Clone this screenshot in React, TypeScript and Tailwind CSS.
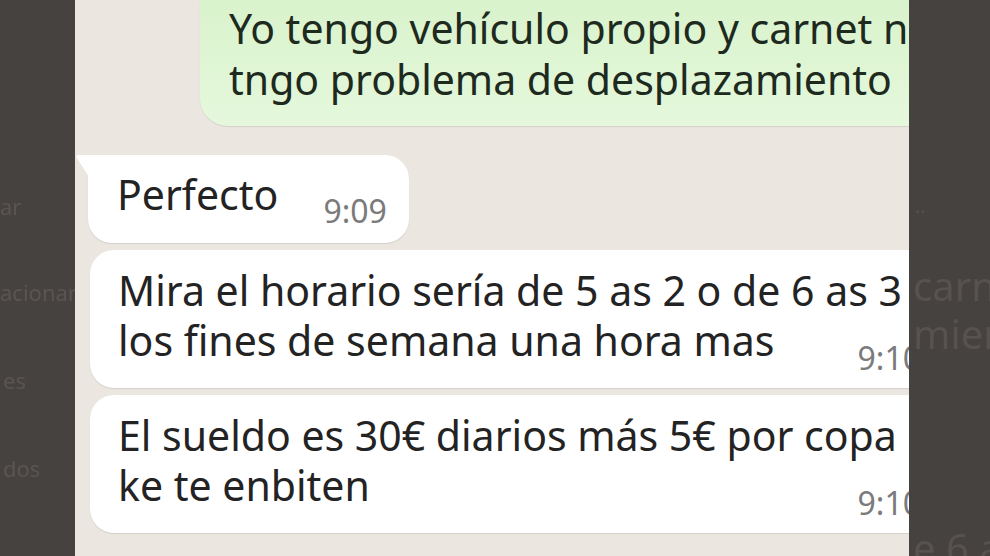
import React from 'react';

const chatFont = { fontFamily: '"Noto Sans", "Open Sans", sans-serif' };

const Time: React.FC<{ value: string; className?: string }> = ({ value, className = '' }) => (
  <div className={`text-[32px] leading-[30px] text-[#7b7b7b] whitespace-nowrap ${className}`}>{value}</div>
);

export default function App() {
  return (
    <div
      className="w-[990px] h-[556px] flex overflow-hidden bg-[#46423f]"
      style={chatFont}
    >
      {/* left blurred side */}
      <div className="w-[75px] shrink-0 overflow-hidden text-[22px] text-[#5a5552] whitespace-nowrap blur-[0.6px]">
        <div className="mt-[194px] leading-[24px]">ar</div>
        <div className="mt-[62px] leading-[24px]">acionar</div>
        <div className="mt-[64px] ml-[3px] leading-[24px]">es</div>
        <div className="mt-[64px] ml-[3px] leading-[24px]">dos</div>
      </div>

      {/* chat */}
      <div className="w-[834px] shrink-0 overflow-hidden bg-[#ece6e1] flex flex-col text-[41px] text-[#232323]">
        {/* outgoing */}
        <div className="ml-[125px] w-[760px] h-[126px] shrink-0 rounded-bl-[28px] bg-gradient-to-b from-[#d9f3cc] to-[#e5f8dc] shadow-[0_1px_1px_rgba(0,0,0,0.1)] pl-[29px] pt-[3px] leading-[51px] text-[#1e2a1e] whitespace-nowrap">
          <div>Yo tengo vehículo propio y carnet no</div>
          <div>tngo problema de desplazamiento</div>
        </div>

        {/* Perfecto */}
        <div className="relative ml-[13px] mt-[29px] h-[88px] w-fit shrink-0 flex rounded-[24px] rounded-tl-none bg-white shadow-[0_1px_1px_rgba(0,0,0,0.1)]">
          <svg className="absolute -left-[13px] top-0" width="14" height="22" viewBox="0 0 14 22">
            <path d="M14 0 H3 Q0 0 2 3 L14 22 Z" fill="#ffffff" />
          </svg>
          <div className="pl-[29px] pt-[15px] leading-[48px]">Perfecto</div>
          <Time value="9:09" className="self-end ml-[45px] pr-[22px] pb-[17px]" />
        </div>

        {/* horario */}
        <div className="ml-[15px] mt-[7px] w-[852px] shrink-0 flex flex-col rounded-[24px] bg-white shadow-[0_1px_1px_rgba(0,0,0,0.1)] pl-[28px] pr-[21px] pt-[15px] pb-[15px] whitespace-nowrap">
          <div className="leading-[50px]">Mira el horario sería de 5 as 2 o de 6 as 3</div>
          <div className="leading-[50px]">los fines de semana una hora mas</div>
          <Time value="9:10" className="self-end -mt-[22px]" />
        </div>

        {/* sueldo */}
        <div className="ml-[15px] mt-[7px] w-[852px] shrink-0 flex flex-col rounded-[24px] bg-white shadow-[0_1px_1px_rgba(0,0,0,0.1)] pl-[28px] pr-[21px] pt-[15px] pb-[15px] whitespace-nowrap">
          <div className="leading-[50px]">El sueldo es 30€ diarios más 5€ por copa</div>
          <div className="leading-[50px]">ke te enbiten</div>
          <Time value="9:10" className="self-end -mt-[22px]" />
        </div>
      </div>

      {/* right blurred side */}
      <div className="w-[81px] shrink-0 overflow-hidden text-[40px] text-[#57524f] whitespace-nowrap blur-[0.6px]">
        <div className="mt-[196px] ml-[6px] text-[20px] leading-[20px]">..</div>
        <div className="mt-[46px] ml-[4px] leading-[48px]">carne</div>
        <div className="ml-[4px] leading-[48px]">mien</div>
        <div className="mt-[166px] ml-[4px] leading-[48px]">e 6 a</div>
      </div>
    </div>
  );
}
